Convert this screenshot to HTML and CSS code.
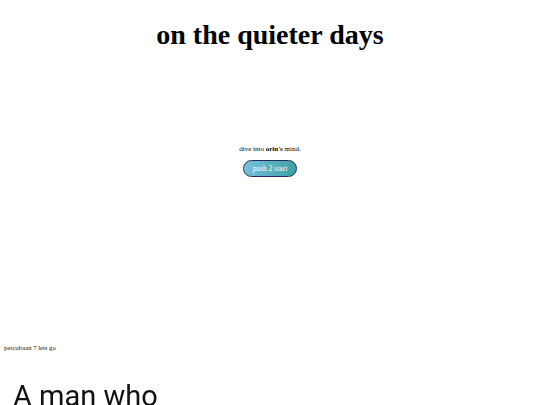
FILE: index.html
```html
<!DOCTYPE html>
<html lang="en">
<head>
    <meta charset="UTF-8">
    <meta name="viewport" content="width=device-width, initial-scale=1.0">
    <title>on the quieter days</title>
    <link rel="stylesheet" href="styles.css">
</head>
<body>
    <h1 class="title">on the quieter days</h1>

    <!-- Intro -->
    <div class="intro">
        <p class="lead">dive into <b>orin's</b> mind.</p>
        <button class="start">push 2 start</button>
    </div>

    <p class="note">percobaan 7 lets go</p>

    <div class="story">A man who</div>
</body>
</html>
```

FILE: styles.css
```css
body {
    font-family: "Liberation Serif", "Times New Roman", serif;
    margin: 0;
    padding: 0 4px;
    background-color: #fff;
    color: #000;
    overflow: hidden;
    height: 405px;
}

.title {
    font-size: 28px;
    font-weight: bold;
    text-align: center;
    margin: 19px 0 0;
}

.intro {
    text-align: center;
    margin-top: 94px;
}

.lead {
    font-size: 7px;
    margin: 0;
    line-height: 9px;
}

.start {
    margin-top: 6px;
    padding: 3px 9px;
    font-family: inherit;
    font-size: 7.5px;
    color: #fff;
    background: linear-gradient(100deg, #78c2de, #3aa0a4);
    border: 1.5px solid #25285a;
    border-radius: 10px;
    cursor: pointer;
}

.note {
    font-size: 6.7px;
    margin: 167px 0 0;
    color: #111;
}

.story {
    font-family: Roboto, "Liberation Sans", Arial, sans-serif;
    font-size: 29px;
    line-height: 34px;
    color: #111;
    margin: 28px 0 0 9px;
    filter: blur(0.4px);
}
```
